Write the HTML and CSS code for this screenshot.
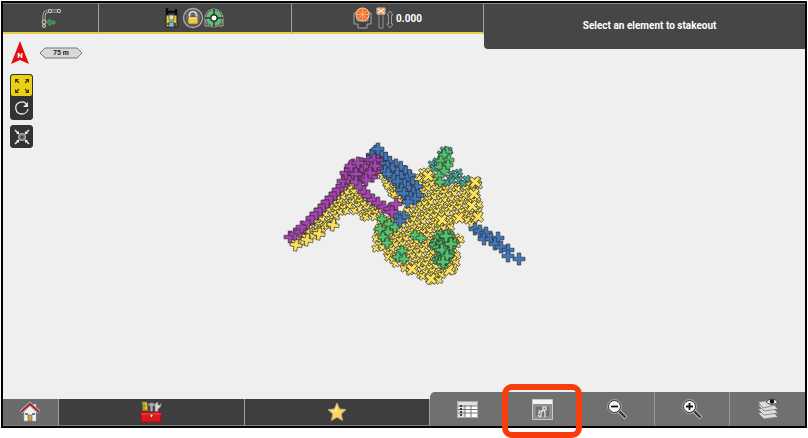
FILE: index.html
```html
<!DOCTYPE html>
<html lang="en">
<head>
    <meta charset="UTF-8">
    <meta name="viewport" content="width=device-width, initial-scale=1.0">
    <title>Stakeout</title>
    <link rel="stylesheet" href="styles.css">
</head>
<body>

<div class="screen">
    <header class="topbar">
        <button class="status" aria-label="Line work">
            <svg width="20" height="20" viewBox="0 0 20 20">
                <path d="M3 18V8Q3 3 9 3H17" fill="none" stroke="#c9beb5" stroke-width="3"/>
                <path d="M3 18V8Q3 3 9 3H17" fill="none" stroke="#4a4644" stroke-width="1.4"/>
                <g fill="#5a504a" stroke="#d4c8bf"><circle cx="9" cy="3" r="1.7"/><circle cx="18" cy="3" r="1.7"/><circle cx="3" cy="14" r="2"/><circle cx="3" cy="18" r="1.5"/></g>
                <path d="M5 14l4-3v2h5v3H9v2z" fill="#328c50" stroke="#75ad83" stroke-width=".5"/>
            </svg>
        </button>
        <button class="status" aria-label="Instrument">
            <svg width="13" height="22" viewBox="0 0 13 22">
                <path d="M2 1v7M11 2v6M2 5h9" stroke="#0b0b0b" stroke-width="2.4"/>
                <path d="M1 8h11v12H1z" fill="#e3cc3b" stroke="#181818"/>
                <path d="M4 8h5v5H4z" fill="#d8ddc5" stroke="#555" stroke-width=".8"/>
                <path d="M4 15h5v5H4z" fill="#80b5e3" stroke="#345" stroke-width=".7"/>
                <path d="M2 17h2M10 16v4" stroke="#222" stroke-width="1.5"/>
            </svg>
            <svg class="lock" width="22" height="22" viewBox="0 0 22 22">
                <circle cx="11" cy="11" r="9.5" fill="#686868" stroke="#aaa" stroke-width="1.3"/>
                <circle cx="11" cy="11" r="8" fill="none" stroke="#3d3d3d" stroke-width=".7"/>
                <path d="M7.5 11V8a3.5 3.5 0 017 0v3" fill="none" stroke="#ddd" stroke-width="1.7"/>
                <rect x="6" y="10" width="10" height="7" rx="1" fill="#f2c653" stroke="#594819" stroke-width=".6"/>
                <path d="M7 11h8" stroke="#ffe795"/>
            </svg>
            <svg width="20" height="22" viewBox="0 0 20 22">
                <path d="M1 12v7h4M19 12v7h-4" fill="none" stroke="#aaa"/>
                <circle cx="10" cy="11" r="9" fill="#333" stroke="#a2aaa2"/>
                <circle cx="10" cy="11" r="6" fill="none" stroke="#67bd7b" stroke-width="4"/>
                <path d="M10 2v18M1 11h18" stroke="#263d2c" stroke-width="1.5"/>
                <circle cx="10" cy="11" r="3" fill="#fff" stroke="#26432d"/>
            </svg>
        </button>
        <button class="status" aria-label="Target height">
            <svg width="20" height="22" viewBox="0 0 20 22">
                <path d="M4 6H1v11h4v4h9v-4h4V6h-3" fill="#414141" stroke="#a7a7a7"/>
                <path d="M4 8v6h11V8" fill="none" stroke="#999"/>
                <circle cx="9.5" cy="7.5" r="6.5" fill="#ef7132" stroke="#ffc091" stroke-width="1.2"/>
                <path d="M9.5 2v11M4 7.5h11M6 4l7 7M13 4l-7 7" stroke="#ffad76" stroke-width=".9"/>
            </svg>
            <svg class="pole" width="17" height="22" viewBox="0 0 17 22">
                <path d="M3 7h4v14H3z" fill="#444" stroke="#aaa" stroke-width=".8"/>
                <path d="M1 1h8v6H1z" fill="#e58748" stroke="#d5bfae"/>
                <path d="M2 2l6 4M8 2L2 6" stroke="#fff1df" stroke-width="1.4"/>
                <path d="M14 4l3 4h-1.500v9H17l-3 4-3-4h1.500V8H11z" fill="#444" stroke="#b0b0b0" stroke-width=".8"/>
            </svg>
            <span class="height">0.000</span>
        </button>
        <div class="message">Select an element to stakeout</div>
    </header>

    <main class="map">
        <div class="compass">
            <svg width="20" height="24" viewBox="0 0 20 24" aria-label="North">
                <path d="M10 0l9 23-9-4-9 4z" fill="#e20c12"/>
                <text x="10" y="17" text-anchor="middle">N</text>
            </svg>
            <div class="scale">
                <svg width="44" height="12" viewBox="0 0 44 12">
                    <path d="M6 1h32l5 5-5 5H6L1 6z" fill="#d8d8d8" stroke="#777"/>
                </svg>
                <span>75 m</span>
            </div>
        </div>
        <div class="tools">
            <button class="tool active" aria-label="Zoom to extents">
                <svg width="16" height="16" viewBox="0 0 16 16">
                    <g fill="none" stroke="#3b3510" stroke-width="1.2"><path d="M5 5L2 2M11 5l3-3M5 11l-3 3M11 11l3 3"/></g>
                    <path d="M1 1h4L1 5zM15 1v4l-4-4zM1 15v-4l4 4zM15 15h-4l4-4z" fill="#3b3510"/>
                </svg>
            </button>
            <button class="tool" aria-label="Rotate">
                <svg width="16" height="16" viewBox="0 0 16 16">
                    <path d="M13 5A6 6 0 108 14a6 6 0 006-5" fill="none" stroke="#e8e8e8" stroke-width="1.3"/>
                    <path d="M14 2v5H9z" fill="#e8e8e8"/>
                </svg>
            </button>
        </div>
        <div class="tools">
            <button class="tool" aria-label="Center on position">
                <svg width="16" height="16" viewBox="0 0 16 16">
                    <circle cx="8" cy="8" r="3.5" fill="#777" stroke="#c4c4c4"/>
                    <circle cx="8" cy="8" r="1.5" fill="#444"/>
                    <path d="M1 1l4 4M15 1l-4 4M1 15l4-4M15 15l-4-4" stroke="#eee" stroke-width="1.5"/>
                    <path d="M5 2v3H2zM11 2v3h3zM5 14v-3H2zM11 14v-3h3z" fill="#eee"/>
                </svg>
            </button>
        </div>
        <svg id="points" class="points" width="250" height="150" viewBox="279 138 250 150"></svg>
    </main>

    <footer class="bottombar">
        <button class="home" aria-label="Home">
            <svg width="20" height="20" viewBox="0 0 20 20">
                <path d="M4 10l6-6 6 6v9H4z" fill="#f4f1ee" stroke="#aaa" stroke-width=".5"/>
                <path d="M14 2h2v5h-2z" fill="#e7d9d4"/>
                <path d="M1 10l9-8 9 8" fill="none" stroke="#dfcece" stroke-width="3.4"/>
                <path d="M1 10l9-8 9 8" fill="none" stroke="#982c38" stroke-width="2.2"/>
                <path d="M5 11h3v2H5zM12 11h3v2h-3z" fill="#557dad"/>
                <path d="M8 13h4v6H8z" fill="#c5a15c" stroke="#75603c" stroke-width=".6"/>
            </svg>
        </button>
        <button class="dark" aria-label="Toolbox">
            <svg width="22" height="22" viewBox="0 0 22 22">
                <path d="M2 1h5l1 9H3z" fill="#e4cf36" stroke="#65602b" stroke-width=".7"/>
                <path d="M3 3h2M3 5h3M3 7h2M4 9h3" stroke="#4d4920" stroke-width=".8"/>
                <path d="M8 3q4-3 7 0v2h-2v6h-3V5H8z" fill="#a8aaac" stroke="#555" stroke-width=".7"/>
                <path d="M15 11V6q-1-4 3-5v3h2l1-2q1 4-3 6v3z" fill="#d5d5d5" stroke="#777" stroke-width=".7"/>
                <path d="M1 11h20v10H1z" fill="#df161b" stroke="#8c1417"/>
                <path d="M1 13h20" stroke="#fb514d"/>
                <path d="M10 13h3v2l-1.5 2L10 15z" fill="#eee" stroke="#821718" stroke-width=".8"/>
            </svg>
        </button>
        <button class="dark" aria-label="Favorites">
            <svg width="20" height="20" viewBox="0 0 20 20">
                <path d="M10 1l2.6 6 6.4.6-4.800 4.300 1.400 6.600L10 15.200l-5.600 3.300 1.400-6.600L1 7.600 7.400 7z" fill="#ffd45d" stroke="#b5b17c"/>
                <path d="M10 3.500V10L4 8.500l4-.5z" fill="#ffe9a5"/>
            </svg>
        </button>
        <div class="panel">
            <button aria-label="Table">
                <svg width="21" height="17" viewBox="0 0 21 17">
                    <path d="M0 0h21v17H0z" fill="#e0e0e0"/>
                    <path d="M8 5h12v11H8z" fill="#fff"/>
                    <path d="M1 5h19M1 8.500h19M1 12h19M8 4v12M14 4v12" stroke="#777"/>
                    <path d="M4 4v12" stroke="#222" stroke-width="1.6" stroke-dasharray="2 1"/>
                    <path d="M.5.5h20v16H.5z" fill="none" stroke="#aaa"/>
                </svg>
            </button>
            <button class="marked" aria-label="Stakeout settings">
                <svg width="21" height="21" viewBox="0 0 21 21">
                    <path d="M.5.5h20v20H.5z" fill="#8d8d8d" stroke="#c9c9c9"/>
                    <path d="M1 1h19v4H1z" fill="#f4f4f4"/>
                    <path d="M3 7h15v11H3z" fill="#707070" stroke="#999"/>
                    <path d="M11 8h3v3h-3zM11 11l-2 3v4M12 11l1 3v4M10 12H7v3M6 16l2 2" fill="none" stroke="#eee" stroke-width="1.2"/>
                </svg>
            </button>
            <button aria-label="Zoom out">
                <svg width="21" height="21" viewBox="0 0 21 21">
                    <path d="M11 11l8 8" stroke="#bbb" stroke-width="4"/>
                    <path d="M11 11l7.500 7.500" stroke="#333" stroke-width="2.2"/>
                    <circle cx="7.5" cy="7.5" r="6" fill="#f8f8f8" stroke="#292929"/>
                    <circle cx="7.5" cy="7.5" r="7" fill="none" stroke="#bbb" stroke-width=".7"/>
                    <path d="M4 7.500h7" stroke="#111" stroke-width="1.8"/>
                </svg>
            </button>
            <button aria-label="Zoom in">
                <svg width="21" height="21" viewBox="0 0 21 21">
                    <path d="M11 11l8 8" stroke="#bbb" stroke-width="4"/>
                    <path d="M11 11l7.500 7.500" stroke="#333" stroke-width="2.2"/>
                    <circle cx="7.5" cy="7.5" r="6" fill="#f8f8f8" stroke="#292929"/>
                    <circle cx="7.5" cy="7.5" r="7" fill="none" stroke="#bbb" stroke-width=".7"/>
                    <path d="M4 7.500h7M7.500 4v7" stroke="#111" stroke-width="1.8"/>
                </svg>
            </button>
            <button aria-label="Layers">
                <svg width="22" height="22" viewBox="0 0 22 22">
                    <g fill="#dcdcdc" stroke="#777" stroke-width=".8">
                        <path d="M1 15l14-2 6 6-14 2z"/>
                        <path d="M1 11l14-2 6 6-14 2z"/>
                        <path d="M1 7l14-2 6 6-14 2z"/>
                        <path d="M1 4l14-2 4 5-13 3z"/>
                    </g>
                    <path d="M9 4q6-6 12 0-6 5-12 0z" fill="#fff" stroke="#444"/>
                    <circle cx="15" cy="3.5" r="2.3" fill="#111"/>
                </svg>
            </button>
        </div>
    </footer>
</div>

<script src="points.js"></script>
</body>
</html>
```
FILE: styles.css
```css
* {
    box-sizing: border-box;
}

body {
    margin: 0;
    padding: 1px 1px 10px;
    height: 100vh;
    background-color: #ffffff;
    font-family: Roboto, Arial, sans-serif;
    font-size: 10px;
    font-weight: bold;
}

button {
    display: flex;
    justify-content: center;
    align-items: center;
    margin: 0;
    padding: 0;
    border: 0;
    background: none;
    color: inherit;
    font: inherit;
    cursor: pointer;
}

svg {
    display: block;
    flex: none;
}

.screen {
    display: flex;
    flex-direction: column;
    height: 100%;
    border: 2px solid #050505;
    background-color: #efefef;
}

/* Top bar */
.topbar {
    display: grid;
    grid-template-columns: 12fr 24fr 24fr 40fr;
    grid-template-rows: 31px;
    color: #ffffff;
}

.status {
    background-color: #464646;
    border-top: 1px solid #777777;
    border-right: 1px solid #a0a0a0;
    border-bottom: 2px solid #e8cf45;
}

.lock {
    margin-left: 4px;
}

.pole {
    margin-left: 3px;
}

.height {
    margin-left: 3px;
}

/* hangs below the bar, over the map */
.message {
    display: flex;
    justify-content: center;
    align-items: center;
    height: 46px;
    padding-left: 10px;
    padding-bottom: 2px;
    z-index: 1;
    border-top: 1px solid #8a8a8a;
    border-bottom-left-radius: 4px;
    background-color: #464646;
}

/* Map */
.map {
    position: relative;
    flex: 1;
    padding: 7px;
}

.compass {
    display: flex;
    align-items: center;
    gap: 9px;
    height: 24px;
    margin-bottom: 9px;
}

.compass text {
    fill: #ffffff;
    font-size: 8px;
}

.scale {
    display: grid;
    place-items: center;
    font-size: 7px;
    color: #222222;
}

.scale > * {
    grid-area: 1 / 1;
}

.tools {
    width: 23px;
    margin-bottom: 5px;
    border: 1px solid #333333;
    border-radius: 3px;
    background-color: #333333;
    overflow: hidden;
}

.tool {
    width: 21px;
    height: 21px;
}

.tool + .tool {
    height: 23px;
}

.active {
    border-radius: 2px;
    background-color: #ecd016;
}

.points {
    position: absolute;
    top: 50%;
    left: 50%;
    transform: translate(-50%, -50%);
}

/* Bottom bar */
.bottombar {
    display: grid;
    grid-template-columns: 56fr 186fr 186fr 375fr;
    align-items: end;
}

.home, .dark {
    height: 27px;
    border-right: 1px solid #a0a0a0;
    border-bottom: 1px solid #808080;
}

.home {
    background-color: #6b6b6b;
}

.dark {
    background-color: #3e3e3e;
}

.panel {
    display: grid;
    grid-template-columns: repeat(5, 1fr);
    height: 34px;
    border-top-left-radius: 5px;
    background-color: #707070;
}

.panel button {
    position: relative;
    border-right: 1px solid #999999;
}

.panel button:first-child, .panel button:last-child {
    border-right: 0;
}

.marked::after {
    content: "";
    position: absolute;
    inset: -8px -3px -12px;
    z-index: 2;
    border: 6px solid #f73d0c;
    border-radius: 10px;
}
```
FILE: points.js
```js
const svgNS = "http://www.w3.org/2000/svg";
const map = document.getElementById("points");

const yellow = "#fae25e";
const teal = "#46a598";
const green = "#52c471";
const blue = "#4277bd";
const purple = "#a544b2";

// area: outline filled with points, line: points along a path
const layers = [
    { color: yellow, size: 4, step: 5, turn: 30, area: [[292,240],[297,246],[328,228],[350,209],[374,223],[380,206],[362,194],[350,180],[340,188]] },
    { color: yellow, size: 4, step: 5, turn: 30, area: [[375,164],[386,167],[396,178],[410,196],[401,203],[390,197],[382,181]] },
    { color: yellow, size: 4, step: 5, turn: 35, area: [[413,179],[424,169],[438,172],[444,186],[462,184],[478,177],[480,200],[483,216],[474,228],[464,222],[453,221],[452,232],[464,236],[457,248],[458,264],[448,277],[435,284],[410,272],[390,261],[375,249],[374,230],[380,214],[401,218],[406,208]] },
    { color: yellow, size: 6, turn: 40, line: [[475,182],[474,194],[472,206],[478,217],[459,218],[442,220],[428,176],[417,181],[449,270],[431,279],[412,269]] },
    { color: yellow, size: 6, turn: 10, line: [[296,245],[307,240],[319,234],[333,225]] },
    { color: teal, size: 4, step: 5, turn: 35, area: [[442,187],[445,174],[457,170],[468,180],[462,186],[454,183]] },
    { color: teal, size: 4, turn: 35, line: [[432,164],[434,168],[437,161],[441,154],[444,150],[449,151]] },
    { color: green, size: 5, turn: 0, line: [[447,152],[444,155],[441,161],[449,160],[448,165],[440,167],[444,171],[439,176],[440,182],[382,219],[389,224],[380,229],[388,232],[395,227],[383,237],[387,243],[415,235],[421,238],[402,251],[398,257],[404,259]] },
    { color: green, size: 4, step: 5, turn: 20, area: [[441,230],[450,230],[459,241],[451,251],[453,260],[443,268],[435,264],[432,246]] },
    { color: green, size: 6, turn: 0, line: [[446,236],[451,244],[442,250],[447,256],[443,262]] },
    { color: blue, size: 6, step: 6, turn: 0, area: [[366,157],[372,150],[379,150],[391,158],[406,169],[419,184],[422,197],[416,205],[405,202],[401,190],[390,178],[380,166],[369,166]] },
    { color: blue, size: 6, turn: 0, line: [[378,149],[395,213],[404,217],[400,221],[475,229],[480,231],[486,233],[484,239],[491,239],[498,238],[495,244],[501,247],[508,250],[508,256],[519,259]] },
    { color: purple, size: 6, turn: 0, line: [[290,237],[295,234],[300,232],[302,227],[308,223],[312,218],[316,214],[320,210],[324,206],[327,202],[331,198],[335,194],[338,190],[342,186],[343,181],[348,178],[346,173]] },
    { color: purple, size: 5, step: 6, turn: 0, area: [[344,173],[350,162],[357,158],[365,163],[371,158],[380,158],[378,169],[372,182],[360,181]] },
    { color: purple, size: 6, turn: 0, line: [[351,166],[358,163],[374,160],[375,166],[356,174],[370,173],[366,180],[356,182],[360,187],[364,192],[368,196],[373,200],[378,203],[384,207],[390,209],[396,204],[392,212]] }
];

function inside(x, y, area) {
    let hit = false;
    for (let i = 0, j = area.length - 1; i < area.length; j = i++) {
        const [xi, yi] = area[i];
        const [xj, yj] = area[j];
        if ((yi > y) !== (yj > y) && x < (xj - xi) * (y - yi) / (yj - yi) + xi) {
            hit = !hit;
        }
    }
    return hit;
}

function addCross(x, y, layer) {
    const size = layer.size;
    const w = size > 4 ? 1.8 : 1.3;
    const a = size - w;
    const cross = document.createElementNS(svgNS, "path");
    cross.setAttribute("d", `M${-w} ${-size}h${2 * w}v${a}h${a}v${2 * w}h${-a}v${a}h${-2 * w}v${-a}h${-a}v${-2 * w}h${a}z`);
    cross.setAttribute("transform", `translate(${x} ${y}) rotate(${layer.turn})`);
    cross.setAttribute("fill", layer.color);
    cross.setAttribute("stroke", "#29271f");
    cross.setAttribute("stroke-width", "0.6");
    map.appendChild(cross);
}

layers.forEach(layer => {
    if (layer.line) {
        layer.line.forEach(([x, y]) => addCross(x, y, layer));
        return;
    }
    // survey rows run at an angle to the map
    const angle = 0.6;
    for (let r = -60; r < 60; r++) {
        for (let c = -60; c < 60; c++) {
            const u = c * layer.step + Math.sin(r * 7 + c * 3);
            const v = r * layer.step + Math.cos(r * 5 + c * 11);
            const x = 405 + u * Math.cos(angle) - v * Math.sin(angle);
            const y = 215 + u * Math.sin(angle) + v * Math.cos(angle);
            if (inside(x, y, layer.area)) {
                addCross(x, y, layer);
            }
        }
    }
});
```
